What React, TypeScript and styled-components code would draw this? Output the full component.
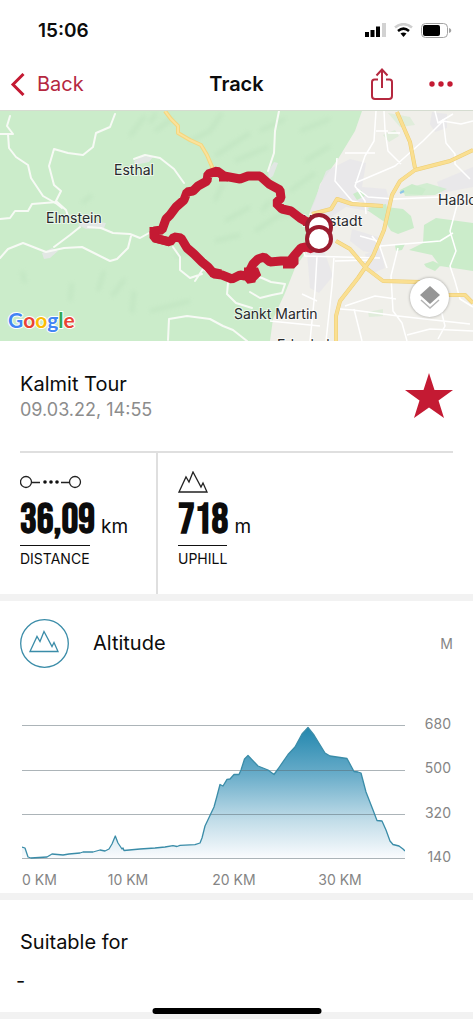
import React from "react";
import styled, { createGlobalStyle } from "styled-components";

const RED = "#c41a33";
const LINK = "#b5283f";
const BLUE = "#3a8ca8";

const GlobalStyle = createGlobalStyle`
  * { box-sizing: border-box; }
  body { margin: 0; background: #fff; color: #0c0c0c; font-family: Inter, "Liberation Sans", sans-serif; }
  h1, h2, p, dl, dt, dd { margin: 0; font-weight: 400; }
`;

const Screen = styled.div`
  display: flex;
  flex-direction: column;
`;

const StatusBar = styled.div`
  display: flex;
  align-items: center;
  justify-content: space-between;
  height: 60px;
  padding: 0 21px 0 38px;
  font-size: 19px;
  font-weight: 600;
`;

const StatusIcons = styled.div`
  display: flex;
  align-items: center;
  gap: 8px;
`;

const NavBar = styled.header`
  display: grid;
  grid-template-columns: 1fr auto 1fr;
  align-items: center;
  height: 50px;
  padding: 0 10px 2px;
`;

const NavButton = styled.button`
  display: flex;
  align-items: center;
  gap: 12px;
  padding: 0;
  border: 0;
  background: none;
  color: ${LINK};
  font: inherit;
  font-size: 20px;
  cursor: pointer;
`;

const NavTitle = styled.h1`
  font-size: 20px;
  font-weight: 600;
`;

const NavActions = styled.div`
  display: flex;
  align-items: center;
  justify-content: flex-end;
  gap: 36px;
  padding-right: 10px;
`;

const MapPanel = styled.section`
  position: relative;
  height: 231px;
  overflow: hidden;
  border-top: 1px solid #d5dcd0;
`;

const MapDrawing = styled.svg`
  display: block;
  width: 100%;
  height: 100%;
`;

const LayerButton = styled.button`
  position: absolute;
  right: 24px;
  bottom: 24px;
  display: flex;
  align-items: center;
  justify-content: center;
  width: 39px;
  height: 39px;
  padding: 0;
  border: 0;
  border-radius: 50%;
  background: #fff;
  box-shadow: 0 0 3px rgba(0, 0, 0, 0.35);
  cursor: pointer;
`;

const Summary = styled.section`
  display: flex;
  align-items: flex-start;
  justify-content: space-between;
  height: 110px;
  margin: 0 20px;
  padding-top: 31px;
`;

const Heading = styled.h2`
  font-size: 20px;
  line-height: 24px;
`;

const DateText = styled.p`
  margin-top: 2px;
  color: #8c8c8c;
  font-size: 18px;
  line-height: 24px;
`;

const StarButton = styled.button`
  padding: 0;
  border: 0;
  background: none;
  line-height: 0;
  cursor: pointer;
`;

const Stats = styled.dl`
  display: flex;
  height: 143px;
  margin: 0 20px;
  border-top: 2px solid #dfdfdf;
`;

const Stat = styled.div<{ $divided?: boolean }>`
  display: flex;
  flex-direction: column;
  align-items: flex-start;
  width: ${(p) => (p.$divided ? "138px" : "auto")};
  margin-right: ${(p) => (p.$divided ? "20px" : "0")};
  padding-top: 16px;
  border-right: ${(p) => (p.$divided ? "2px solid #dfdfdf" : "0")};
`;

const StatIcon = styled.div`
  display: flex;
  align-items: center;
  height: 25px;
`;

const StatValue = styled.dd`
  display: flex;
  align-items: baseline;
  gap: 6px;
  height: 51px;
  font-size: 19px;
  line-height: 53px;
`;

const Figure = styled.strong`
  font-family: "Bebas Neue", "Roboto Condensed", "Liberation Sans Narrow", "Liberation Sans", sans-serif;
  font-size: 42px;
  font-weight: 700;
`;

const StatLabel = styled.dt`
  order: 3;
  padding-top: 4px;
  border-top: 1px solid #111;
  font-size: 14px;
  line-height: 18px;
`;

const Band = styled.div`
  height: 7px;
  background: #f2f2f2;
`;

const Altitude = styled.section`
  height: 292px;
  padding: 17px 20px 0;
`;

const AltitudeHead = styled.div`
  display: flex;
  align-items: center;
  gap: 24px;
  height: 50px;
`;

const Unit = styled.span`
  margin-left: auto;
  color: #858585;
  font-size: 14px;
`;

const Chart = styled.div`
  display: grid;
  grid-template-columns: 1fr 46px;
  row-gap: 11px;
  padding: 52px 2px 0;
`;

const Plot = styled.svg`
  display: block;
  width: 100%;
  height: 140px;
`;

const ScaleY = styled.div`
  display: flex;
  flex-direction: column;
  justify-content: space-between;
  align-items: flex-end;
  height: 151px;
  margin: -5px 0 -6px;
  color: #858585;
  font-size: 14px;
  line-height: 18px;
`;

const ScaleX = styled.div`
  display: grid;
  grid-template-columns: 53fr 106fr 106fr 106fr 12fr;
  color: #858585;
  font-size: 14px;
  line-height: 18px;
  text-align: center;
  white-space: nowrap;
  span:first-child { text-align: left; }
`;

const Suitable = styled.section`
  height: 112px;
  padding: 30px 20px 0;
`;

const SuitableValue = styled.p`
  margin: 15px 0 0 -4px;
  font-size: 20px;
  line-height: 24px;
`;

const HomeIndicator = styled.div`
  position: fixed;
  bottom: 10px;
  left: 50%;
  width: 169px;
  height: 6px;
  border-radius: 3px;
  background: #000;
  transform: translateX(-50%);
`;

const MOUNTAIN = "M1 21 8 6l3 5L15 1l8 15 2-4 4 9z";

const PROFILE =
  "M0 127 3 128 6 137 9 138 25 137 30 134 41 135 47 134 58 133 61 132 71 132 78 130 83 131 87 129 90 124 93.3 116 96 123 100 129 101 128 102 130.500 118 129 133 128 143 127 151 125.700 155 126.500 158 125.300 173 124.700 178 123 180 118 183 106 192 87 195 76 198 64.500 201 66 205 59.300 208 59 212 54.500 217 54.500 219 50 222.500 39 226 35.500 236 46 246 50 252 54.500 256 49 266 34.500 273 27 280 14 286 7.500 292 15 303 33 308 36 325 38.500 332 51.500 336 52 339 53 344 72 351 90 355 100.500 360 101 364 110 368 121 371 124.500 377 126 381 129 383 131";

const GOOGLE: [string, string][] = [
  ["G", "#4285f4"],
  ["o", "#ea4335"],
  ["o", "#fbbc05"],
  ["g", "#4285f4"],
  ["l", "#34a853"],
  ["e", "#ea4335"],
];

const TourMap = () => (
  <MapDrawing viewBox="0 0 473 230" preserveAspectRatio="xMidYMid slice" role="img" aria-label="Map of the tour">
    <defs>
      <filter id="relief" x="-50%" y="-50%" width="200%" height="200%">
        <feGaussianBlur stdDeviation="2" />
      </filter>
    </defs>
    <rect width="473" height="230" fill="#cbecca" />
    <g stroke="#b7ddb9" strokeWidth="4" fill="none" opacity=".4" filter="url(#relief)">
      <path d="M130 25 145 5M150 12 156 2M82 92 92 84M112 185 125 168M98 180 104 160M70 190 72 172M25 172 22 160M132 202 134 180M155 20 172 8M190 30 210 20 222 2M215 45 250 22M235 50 268 36M260 20 285 8M225 110 250 96M255 120 278 105 300 102M215 130 240 124M262 100 270 90M175 145 190 140M150 200 190 190M300 20 330 8M305 50 330 35M290 80 315 62M215 90 223 72" />
    </g>
    <path d="M362 0 355 20 338 48 320 73 316 88 309 103 315 125 308 138 295 157 285 182 273 208 270 230H473V0z" fill="#f0efea" />
    <g fill="#e7e6ea">
      <path d="m318 80 8-20 24-12 16 4-4 24 24 2 6 20-24 2-22-4-18 12-12 4-6-12zM437 71l36-15v20l-32 6zM432 1l15 2v14l-12 4-5-8zM307 141l16-4 10 28-14 17-9-5zM352 118l26 8 3 18-18-4-13-10zM365 143l16-4 4 18-14 6zM42 142l10-5 6 3-8 7-6 1zM78 114l8-5 20 3-2 5-18 1zM134 50l9-5 10 1-4 5-14 3zM268 60l6-9 4 1-5 13-4 3z" opacity=".8" />
    </g>
    <g fill="#cbecca">
      <path d="M400 79 412 73 426 78 422 84 401 82zM367 99 386 96 403 98 411 105 414 117 398 123 391 120 386 112zM424 114 436 107 473 112V160L440 155 432 144 409 139 423 132zM395 134l10-1-3 6-6 1zM424 153l9-3 8 4-6 6-9-4zM353 83l8-4 4 6-8 4zM368 97l18-4 2 9-14 2z" />
      <path d="M368 201l15-3v7l-14 1zM383 24l12-5 4 6-10 6zM388 2l22 4 5 8-15 2z" opacity=".45" />
      <path d="m403 78 24-6 20 6-12 6-30 1z" opacity=".8" />
    </g>
    <path d="m400 82 4-2" stroke="#8ec6e8" strokeWidth="2" />

    <g fill="none" stroke="#f7faf5" strokeWidth="2" strokeLinejoin="round" strokeLinecap="round">
      <path d="M10 5 7 15 13 23H0M8 23 9 37 16 46 28 54 31 67 35 73 43 85 57 93 62 97" />
      <path d="M115 3 110 16 96 22 93 36 83 44 68 42 54 38 49 55 54 74 61 80 56 90 66 99 68 105M0 108 10 107 15 100 28 100 32 93 57 91" />
      <path d="M80 116 70 124 54 136M88 116 101 117 113 122 130 123 140 127 149 122M0 147 8 138 23 132 46 141 64 137 82 136 96 143 110 150 117 148 128 137 131 125" />
      <path d="M134 48 145 44 160 47 174 58 184 72M279 0 275 20 274 42 268 60M173 136 180 146 180 159 190 167 202 163M195 170 203 158 213 165" />
      <path d="M228 172 227 183 236 192 252 197M168 229 169 208 187 205 210 208 223 215 233 219 247 230" />
      <path d="m250 181 10 6 12-3 10-2 3-9-14-2-9-4-12-3" />
    </g>
    <g fill="none" stroke="#fff" strokeWidth="1.500" strokeLinejoin="round">
      <path d="M376 0 374 30 365 45 355 75 365 90 366 103M384 0 385 19 388 40 401 53M376 20H388M355 72 395 55 423 30 443 10 461 13 473 10M443 8 446 32 455 43 455 53 470 68M435 0 438 12 453 3M388 22H400M345 42H375M355 76 368 86 395 88 440 86 473 88M452 88 457 94 450 120 456 140 450 155 455 170 460 188 473 196M372 125 380 135 440 130 453 122M335 150 372 149M302 135 305 145 380 147M317 145 315 180 310 230M334 145 332 175 326 230M317 190 302 183M270 210 320 215M398 137 391 165 393 200 402 212 407 230M340 198 353 199 398 205 470 213M354 198 362 230M396 188 375 185 345 195M407 224 430 218 473 220M440 195 445 215 438 228M337 47 335 70 352 90 370 94M360 125 378 130 387 157" />
    </g>
    <g fill="none" strokeLinejoin="round" strokeLinecap="butt">
      <path d="M397 1 410 31 415 57M473 39 450 50 415 59 400 70 392 84 384 119 373 145 358 167 340 190 336 205 336 230M312 103 331 98 337 88 352 93 383 95M336 130 350 138 366 157 383 170 420 171M448 184 465 184 473 192" stroke="#eccd74" strokeWidth="4" />
      <path d="M397 1 410 31 415 57M473 39 450 50 415 59 400 70 392 84 384 119 373 145 358 167 340 190 336 205 336 230M312 103 331 98 337 88 352 93 383 95M336 130 350 138 366 157 383 170 420 171M448 184 465 184 473 192" stroke="#fadf91" strokeWidth="3" />
      <path d="M165 0 171 8 178 15 178 22 190 29 201 34 207 44 213 58" stroke="#f3d67f" strokeWidth="4" />
      <path d="M165 0 171 8 178 15 178 22 190 29 201 34 207 44 213 58" stroke="#fbe29b" strokeWidth="2" />
    </g>

    <g fontFamily="Inter, Liberation Sans, sans-serif" fontSize="14" fill="#28292c" stroke="#fff" strokeOpacity=".6" strokeWidth="2" paintOrder="stroke">
      <text x="114" y="64">Esthal</text>
      <text x="46" y="112">Elmstein</text>
      <text x="302" y="115">Neustadt</text>
      <text x="234" y="208">Sankt Martin</text>
      <text x="438" y="94">Haßloch</text>
      <text x="277" y="239">Edenkoben</text>
    </g>

    <g fill="none" stroke={RED} strokeWidth="9" strokeLinejoin="bevel">
      <path d="M318 113 307 111 300 107 291 100 282 98 276 92 281 87 280 79 269 73 260 65 248 65 240 68 224 65 217 60 208 63 207 70 198 75 193 80 187 81 184 89 176 96 170 104 166 108 162 119 154 120 155 127 170 131 174 126 181 127 187 137 194 143 202 151 208 156 214 163 222 164 232 168 240 164 245 165 249 161 253 153 258 148 264 146 270 151 281 150 290 150 294 145 301 137 306 136 312 138 319 128" />
      <path d="M244 161h14l-6 6-1 3-4-5M283 153h11v-6M219 66h9M211 161l10 2M154 116v11l16 4" />
    </g>
    <g fill="#fff" stroke="#9b1c2f" strokeWidth="4">
      <circle cx="319" cy="116" r="12" />
      <circle cx="319" cy="128" r="12" />
    </g>
    <text x="8" y="217" fontFamily="Lato, Inter, sans-serif" fontWeight="700" fontSize="21" stroke="#fff" strokeWidth="2" paintOrder="stroke">
      {GOOGLE.map(([letter, color], i) => (
        <tspan key={i} fill={color}>{letter}</tspan>
      ))}
    </text>
  </MapDrawing>
);

export default function App() {
  return (
    <Screen>
      <GlobalStyle />
      <StatusBar>
        <span>15:06</span>
        <StatusIcons>
          <svg width="21" height="14" viewBox="0 0 21 14" aria-hidden="true">
            <path d="M0 9h4v5H0zM5.500 7h4v7h-4zM11 3.500h4V14h-4z" />
            <path d="M17 0h4v14h-4z" fill="#d2d2d2" />
          </svg>
          <svg width="19" height="14" viewBox="0 0 19 14" fill="none" strokeWidth="2.500" aria-hidden="true">
            <path d="M1 4.500C6 0 13 0 18 4.500" stroke="#cfcfcf" />
            <path d="M4 8c3.500-3 7.500-3 11 0" stroke="#000" />
            <path d="m6.500 10.500 3 3.500 3-3.500c-2-1.500-4-1.500-6 0z" fill="#000" />
          </svg>
          <svg width="31" height="15" viewBox="0 0 31 15" aria-hidden="true">
            <rect x=".5" y=".5" width="26" height="14" rx="4" fill="none" stroke="#a2a2a2" />
            <rect x="2" y="2" width="17" height="11" rx="2" />
            <path d="M28 5c3 1 3 4 0 5z" fill="#a2a2a2" />
          </svg>
        </StatusIcons>
      </StatusBar>

      <NavBar>
        <NavButton type="button">
          <svg width="15" height="23" viewBox="0 0 15 23" fill="none" stroke={RED} strokeWidth="3" aria-hidden="true">
            <path d="M13.500 1 3 11.500 13.500 22" />
          </svg>
          Back
        </NavButton>
        <NavTitle>Track</NavTitle>
        <NavActions>
          <NavButton type="button" aria-label="Share">
            <svg width="22" height="32" viewBox="0 0 22 32" fill="none" stroke={LINK} strokeWidth="2" aria-hidden="true">
              <path d="M7 11.500H3.500Q1 11.500 1 14v14q0 3 3 3h14q3 0 3-3V14q0-2.500-2.500-2.500H15M11 20V2M5.500 7.500 11 1.500l5.500 6" />
            </svg>
          </NavButton>
          <NavButton type="button" aria-label="More">
            <svg width="24" height="6" viewBox="0 0 24 6" fill={RED} aria-hidden="true">
              <circle cx="3" cy="3" r="2.700" />
              <circle cx="12" cy="3" r="2.700" />
              <circle cx="21" cy="3" r="2.700" />
            </svg>
          </NavButton>
        </NavActions>
      </NavBar>

      <MapPanel>
        <TourMap />
        <LayerButton type="button" aria-label="Map layers">
          <svg width="20" height="24" viewBox="0 0 20 24" aria-hidden="true">
            <path d="M10 0 20 9 10 18 0 9z" fill="#969696" />
            <path d="m1 14 9 8 9-8" fill="none" stroke="#b5b5b5" strokeWidth="1.500" />
          </svg>
        </LayerButton>
      </MapPanel>

      <Summary>
        <div>
          <Heading>Kalmit Tour</Heading>
          <DateText>09.03.22, 14:55</DateText>
        </div>
        <StarButton type="button" aria-label="Favourite">
          <svg width="48" height="48" viewBox="0 0 48 48" aria-hidden="true">
            <path d="M24 1 29.500 18H48L33.500 28.500 39 46 24 35.500 9 46 14.500 28.500 0 18H18.500z" fill={RED} />
          </svg>
        </StarButton>
      </Summary>

      <Stats>
        <Stat $divided>
          <StatIcon>
            <svg width="62" height="14" viewBox="0 0 62 14" fill="none" stroke="#222" strokeWidth="1.300" aria-hidden="true">
              <circle cx="6" cy="7" r="5.500" />
              <circle cx="55" cy="7" r="5.500" />
              <path d="M12 7.500h8M41 7.500h8" />
              <g fill="#111" stroke="none">
                <circle cx="25" cy="7" r="1.800" />
                <circle cx="31" cy="7" r="1.800" />
                <circle cx="37" cy="7" r="1.800" />
              </g>
            </svg>
          </StatIcon>
          <StatValue><Figure>36,09</Figure>km</StatValue>
          <StatLabel>DISTANCE</StatLabel>
        </Stat>
        <Stat>
          <StatIcon>
            <svg width="30" height="22" viewBox="0 0 30 22" fill="none" stroke="#222" strokeWidth="1.300" aria-hidden="true">
              <path d={MOUNTAIN} />
            </svg>
          </StatIcon>
          <StatValue><Figure>718</Figure>m</StatValue>
          <StatLabel>UPHILL</StatLabel>
        </Stat>
      </Stats>

      <Band />

      <Altitude>
        <AltitudeHead>
          <svg width="49" height="49" viewBox="0 0 49 49" fill="none" stroke={BLUE} strokeWidth="1.300" aria-hidden="true">
            <circle cx="24.500" cy="24.500" r="23.800" />
            <path d={MOUNTAIN} transform="translate(9 11.500)" />
          </svg>
          <Heading>Altitude</Heading>
          <Unit>M</Unit>
        </AltitudeHead>
        <Chart>
          <Plot viewBox="0 0 383 140" preserveAspectRatio="none" role="img" aria-label="Altitude profile">
            <defs>
              <linearGradient id="area" gradientUnits="userSpaceOnUse" x1="0" y1="8" x2="0" y2="139">
                <stop offset="0" stopColor="#2387ae" />
                <stop offset=".35" stopColor="#68acc9" />
                <stop offset=".7" stopColor="#c0dce8" />
                <stop offset="1" stopColor="#fbfcfe" />
              </linearGradient>
            </defs>
            <path d={`${PROFILE}V138.500H0z`} fill="url(#area)" />
            <g stroke="#5a6a72" strokeOpacity=".5">
              <path d="M0 5.500H383M0 50.500H383M0 94.500H383M0 138.500H383" />
            </g>
            <path d={PROFILE} fill="none" stroke={BLUE} strokeWidth="1.300" strokeLinejoin="round" vectorEffect="non-scaling-stroke" />
          </Plot>
          <ScaleY>
            <span>680</span>
            <span>500</span>
            <span>320</span>
            <span>140</span>
          </ScaleY>
          <ScaleX>
            <span>0 KM</span>
            <span>10 KM</span>
            <span>20 KM</span>
            <span>30 KM</span>
          </ScaleX>
        </Chart>
      </Altitude>

      <Band />

      <Suitable>
        <Heading>Suitable for</Heading>
        <SuitableValue>-</SuitableValue>
      </Suitable>

      <Band />
      <HomeIndicator />
    </Screen>
  );
}
